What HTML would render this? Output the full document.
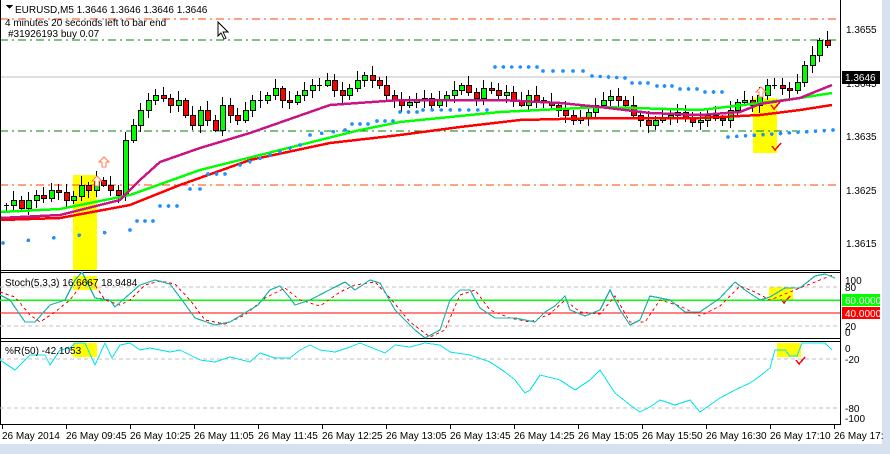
<!DOCTYPE html>
<html><head><meta charset="utf-8"><style>
html,body{margin:0;padding:0;background:#fff;width:890px;height:454px;overflow:hidden;font-family:"Liberation Sans",sans-serif}
svg text{font-family:"Liberation Sans",sans-serif;font-size:10px}
</style></head><body>
<svg id="s" width="890" height="454" xmlns="http://www.w3.org/2000/svg" shape-rendering="crispEdges">
<rect width="890" height="454" fill="#fff"/>
<rect x="882" y="0" width="8" height="454" fill="#d6e2ef"/>
<rect x="0" y="444" width="890" height="10" fill="#d6e2ef"/>
<rect x="73" y="175" width="24" height="95" fill="#ffff00"/>
<rect x="753" y="98" width="24" height="55" fill="#ffff00"/>
<rect x="73" y="276" width="24" height="14" fill="#ffff00"/>
<rect x="769" y="287" width="24" height="14" fill="#ffff00"/>
<rect x="73" y="343" width="24" height="14" fill="#ffff00"/>
<rect x="777" y="343" width="24" height="14" fill="#ffff00"/>
<line x1="0" y1="19" x2="840" y2="19" stroke="#ff4500" stroke-dasharray="8,4,2,4"/>
<line x1="0" y1="40" x2="840" y2="40" stroke="#008000" stroke-dasharray="8,4,2,4"/>
<line x1="0" y1="77" x2="840" y2="77" stroke="#c0c0c0"/>
<line x1="0" y1="131" x2="800" y2="131" stroke="#008000" stroke-dasharray="8,4,2,4"/>
<line x1="0" y1="185" x2="840" y2="185" stroke="#ff4500" stroke-dasharray="8,4,2,4"/>
<g id="cand"></g>
<polyline fill="none" stroke="#ff0000" stroke-width="2.5" points="0,220 60,218 130,205 180,185 250,160 330,143 400,135 460,127 520,120 600,118 700,118 760,115 800,110 832,105"/>
<polyline fill="none" stroke="#00ff00" stroke-width="2.5" points="0,212 60,209 130,195 200,170 300,145 360,130 400,122 500,112 600,107 700,110 760,103 800,98 832,93"/>
<polyline fill="none" stroke="#c71585" stroke-width="2.5" points="0,218 60,215 120,200 140,180 160,162 200,148 250,133 330,105 400,100 500,100 560,103 600,107 650,113 700,115 740,112 760,104 800,98 832,85"/>
<g id="sar" fill="#1e90ff"></g>
<path d="M104 157 l5 5 h-3 v5 h-4 v-5 h-3z" fill="#fff" stroke="#ff7f50"/>
<path d="M97 176 l5 5 h-3 v5 h-4 v-5 h-3z" fill="#fff" stroke="#ff7f50"/>
<path d="M761 87 l5 5 h-3 v5 h-4 v-5 h-3z" fill="#fff" stroke="#ff7f50"/>
<path d="M772 146 l3 4 l6 -7" fill="none" stroke="#ff0000" stroke-width="1.5"/>
<path d="M771 105 l3 4 l6 -7" fill="none" stroke="#ff0000" stroke-width="1.5"/>
<path d="M781 299 l3 4 l6 -7" fill="none" stroke="#ff0000" stroke-width="1.5"/>
<path d="M796 360 l3 4 l6 -7" fill="none" stroke="#ff0000" stroke-width="1.5"/>
<path d="M218 22 v14 l3 -3 l3 6 l2 -1 l-3 -6 h5 z" fill="#fff" stroke="#000"/>
<path d="M6 5 h7 l-3.5 4z" fill="#000"/>
<text x="15" y="13" font-size="10.5">EURUSD,M5  1.3646 1.3646 1.3646 1.3646</text>
<text x="5" y="26" font-size="10.5">4 minutes 20 seconds left to bar end</text>
<text x="8" y="37" font-size="10.5">#31926193 buy 0.07</text>
<line x1="840.5" y1="0" x2="840.5" y2="424" stroke="#000"/>
<rect x="0.5" y="270.5" width="840" height="2" fill="none" stroke="#000"/>
<line x1="0" y1="338.5" x2="841" y2="338.5" stroke="#000"/>
<line x1="0" y1="341.5" x2="841" y2="341.5" stroke="#000"/>
<line x1="0" y1="424.5" x2="841" y2="424.5" stroke="#000"/>
<line x1="0.5" y1="0" x2="0.5" y2="424" stroke="#000"/>
<line x1="0" y1="287" x2="840" y2="287" stroke="#c0c0c0" stroke-dasharray="4,3"/>
<line x1="0" y1="326" x2="840" y2="326" stroke="#c0c0c0" stroke-dasharray="4,3"/>
<line x1="0" y1="300" x2="840" y2="300" stroke="#00ff00" stroke-width="1.5"/>
<line x1="0" y1="313" x2="840" y2="313" stroke="#ff0000" stroke-width="1.2"/>
<polyline fill="none" stroke="#ff0000" stroke-dasharray="3,3" points="0,292 15,297 30,315 40,322 55,312 70,300 85,280 95,285 105,300 120,305 130,300 145,285 160,281 175,284 190,300 205,320 225,324 245,315 265,298 285,288 300,300 320,306 340,292 355,285 375,282 390,298 410,322 430,337 445,330 460,295 475,290 490,310 510,318 530,322 550,314 565,300 580,312 600,314 615,296 630,322 645,322 660,300 680,306 700,316 720,306 740,286 755,292 770,300 790,292 805,286 820,280 835,274"/>
<polyline fill="none" stroke="#20b2aa" stroke-width="1.2" points="0,295 10,300 25,322 35,322 50,305 65,300 75,280 82,272 95,298 110,300 115,307 125,298 140,285 155,280 170,284 182,300 195,318 215,325 230,322 258,305 270,290 280,286 290,298 295,305 310,300 335,287 345,282 355,290 370,280 380,283 395,310 415,330 425,338 440,330 450,300 460,290 470,290 480,308 495,318 515,318 535,322 545,312 555,306 565,296 570,310 585,316 600,310 610,290 620,310 630,325 640,320 650,296 670,300 685,312 700,312 720,298 735,282 745,290 760,300 770,297 785,288 800,288 815,276 825,274 835,278"/>
<text x="5" y="286">Stoch(5,3,3) 16.6667 18.9484</text>
<line x1="0" y1="359" x2="840" y2="359" stroke="#c0c0c0" stroke-dasharray="4,3"/>
<line x1="0" y1="408" x2="840" y2="408" stroke="#c0c0c0" stroke-dasharray="4,3"/>
<polyline fill="none" stroke="#00e5ee" points="0,360 15,370 30,355 45,355 50,365 60,350 70,348 75,343 85,343 95,365 105,343 112,358 120,345 130,343 140,350 150,348 160,350 170,352 180,350 190,355 200,360 215,362 230,357 250,362 260,353 275,358 290,358 300,350 310,345 320,350 335,352 350,347 360,343 370,347 385,353 395,345 410,347 425,343 440,345 450,352 470,355 490,362 505,372 515,380 525,393 530,390 540,375 560,380 575,390 590,380 600,370 615,393 630,405 640,412 650,407 660,400 675,405 690,400 700,412 710,405 720,398 735,390 750,383 760,376 770,368 775,350 785,350 790,356 797,356 802,343 825,343 832,350"/>
<text x="5" y="354">%R(50) -42.1053</text>
<g fill="#000" font-size="11">
<text x="846" y="33">1.3655</text>
<text x="846" y="140">1.3635</text>
<text x="846" y="194">1.3625</text>
<text x="846" y="247">1.3615</text>
<text x="846" y="87">1.3645</text>
</g>
<rect x="842" y="71" width="38" height="13" fill="#000"/>
<text x="845" y="81" fill="#fff" font-size="11">1.3646</text>
<g><text x="845" y="284">100</text><text x="845" y="291">80</text><text x="845" y="330">20</text><text x="845" y="336">0</text>
<text x="845" y="352">0</text><text x="845" y="363">-20</text><text x="845" y="412">-80</text><text x="845" y="422">-100</text></g>
<rect x="842" y="294" width="38" height="12" fill="#00ff00"/><text x="845" y="304" fill="#fff" font-size="11">60.0000</text>
<rect x="842" y="307" width="38" height="12" fill="#ff0000"/><text x="845" y="317" fill="#fff" font-size="11">40.0000</text>
<g id="ticks" stroke="#000"></g>
<g font-size="10.5">
<text x="2" y="439">26 May 2014</text><text x="66" y="439">26 May 09:45</text><text x="130" y="439">26 May 10:25</text><text x="194" y="439">26 May 11:05</text><text x="258" y="439">26 May 11:45</text><text x="322" y="439">26 May 12:25</text><text x="386" y="439">26 May 13:05</text><text x="450" y="439">26 May 13:45</text><text x="514" y="439">26 May 14:25</text><text x="578" y="439">26 May 15:05</text><text x="642" y="439">26 May 15:50</text><text x="706" y="439">26 May 16:30</text><text x="770" y="439">26 May 17:10</text><text x="834" y="439">26 May 17:</text>
</g>
</svg>
<script>
(function(){
var NS="http://www.w3.org/2000/svg";
function el(p,t,a){var e=document.createElementNS(NS,t);for(var k in a)e.setAttribute(k,a[k]);p.appendChild(e);}
var C=[205,200,208,200,195,198,190,192,200,196,185,190,180,185,190,195,140,125,110,100,95,98,105,100,115,125,110,120,130,105,115,120,110,100,100,95,88,100,102,95,90,85,85,80,90,95,88,80,75,80,85,95,100,105,102,100,98,105,100,95,90,85,92,98,88,90,95,92,100,105,95,100,102,105,110,115,120,118,112,105,100,96,100,105,115,120,125,120,118,115,112,118,122,120,115,118,120,110,102,100,105,95,85,85,88,90,82,65,55,40,45];
var g=document.getElementById("cand");var n=C.length;var prev=205;
for(var i=0;i<n;i++){var x=Math.round(4+i*(828/n));var o=prev,c=C[i];var tp=Math.min(o,c),bt=Math.max(o,c);
var hw=tp-2-Math.round(Math.abs(Math.sin(i*1.7))*7),lw=bt+2+Math.round(Math.abs(Math.cos(i*2.3))*6);
el(g,"line",{x1:x+2.5,y1:hw,x2:x+2.5,y2:lw,stroke:"#000"});
if(bt-tp<1){el(g,"line",{x1:x,y1:tp+0.5,x2:x+5,y2:tp+0.5,stroke:"#000"});}
else el(g,"rect",{x:x+0.5,y:tp+0.5,width:5,height:bt-tp,fill:c<o?"#00ff00":"#ff0000",stroke:"#000"});
prev=c;}
var S=[[3,243,130,230,6],[137,221,153,221,3],[160,206,177,206,3],[190,189,200,189,2],[208,174,225,174,3],[240,165,300,145,7],[310,135,345,130,4],[352,124,368,124,3],[377,121,393,121,3],[400,112,417,112,3],[423,110,487,110,8],[495,67,537,67,6],[543,71,583,71,5],[592,76,625,78,5],[632,83,648,83,3],[657,86,672,86,3],[680,89,697,89,3],[705,92,722,92,3],[728,137,833,130,13]];
var sg=document.getElementById("sar");
S.forEach(function(s){for(var k=0;k<s[4];k++){var t=s[4]>1?k/(s[4]-1):0;el(sg,"circle",{cx:s[0]+(s[2]-s[0])*t,cy:s[1]+(s[3]-s[1])*t,r:1.8});}});
var tg=document.getElementById("ticks");for(var i=0;i<14;i++){var x=2+i*64+0.5;el(tg,"line",{x1:x,y1:424,x2:x,y2:429});}
})();
</script>
</body></html>
